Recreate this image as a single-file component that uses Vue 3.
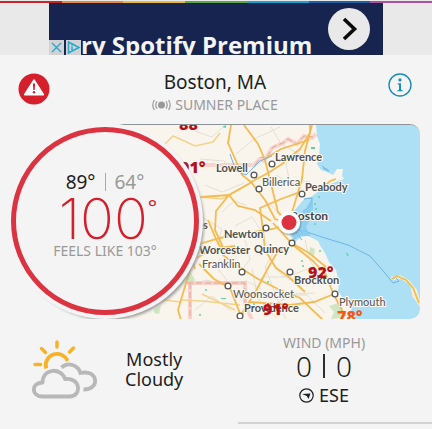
<script setup>
const stripes = ['#c9252b', '#e58a3c', '#e8b83a', '#5ba84a', '#1ba3d0', '#2260a5', '#ab519f']

const towns = [
  { name: 'Lowell', x: 216, y: 171, cx: 254, cy: 174 },
  { name: 'Lawrence', x: 275, y: 160, cx: 272, cy: 163 },
  { name: 'Billerica', x: 262, y: 185, cx: 259, cy: 188, light: true },
  { name: 'Peabody', x: 305, y: 190, cx: 302, cy: 193 },
  { name: 'Newton', x: 224, y: 237, cx: 266, cy: 227 },
  { name: 'Worcester', x: 199, y: 253 },
  { name: 'Quincy', x: 254, y: 252, cx: 292, cy: 242 },
  { name: 'Franklin', x: 202, y: 267, cx: 242, cy: 271, light: true },
  { name: 'Brockton', x: 294, y: 283, cx: 290, cy: 271 },
  { name: 'Woonsocket', x: 233, y: 297, cx: 228, cy: 285, light: true },
  { name: 'Plymouth', x: 339, y: 305, cx: 335, cy: 293, light: true },
  { name: 'Providence', x: 244, y: 311, cx: 240, cy: 315 }
]

const temps = [
  { value: '88°', x: 179, y: 129, color: '#b5121b' },
  { value: '91°', x: 180, y: 172, color: '#b5121b' },
  { value: '92°', x: 308, y: 277, color: '#b5121b' },
  { value: '91°', x: 263, y: 314, color: '#c00d12' },
  { value: '78°', x: 337, y: 321, color: '#ee5a1c' }
]
</script>

<template>
  <main class="app">
    <div class="stripes">
      <span v-for="c in stripes" :key="c" :style="{ background: c }"></span>
    </div>

    <section class="ad-slot">
      <div class="ad">
        <span class="ad-text">ry Spotify Premium</span>
        <div class="ad-marks">
          <button class="mark" aria-label="Close ad">
            <svg width="15" height="15" viewBox="0 0 15 15"><path d="M3 3L12 12M12 3L3 12" fill="none" stroke="#22a9cc" stroke-width="1.4" /></svg>
          </button>
          <button class="mark" aria-label="Ad choices">
            <svg width="15" height="15" viewBox="0 0 15 15"><path d="M2.5 2L13 7.500L2.500 13Z M6 6.500V10" fill="none" stroke="#22a9cc" stroke-width="1.5" /><circle cx="6" cy="4.900" r=".8" fill="#22a9cc" /></svg>
          </button>
        </div>
        <button class="ad-go" aria-label="Open ad">
          <svg width="42" height="42" viewBox="0 0 42 42"><path d="M16 11L26.500 21L16 31" fill="none" stroke="#0b0b0b" stroke-width="3.600" /></svg>
        </button>
      </div>
    </section>

    <header class="place">
      <button class="icon-btn" aria-label="Weather alert">
        <svg width="32" height="32" viewBox="0 0 32 32">
          <circle cx="16" cy="16" r="15.500" fill="#d5202b" />
          <path d="M16 7.500L25 21.500H7Z" fill="#fff" stroke="#fff" stroke-width="2.200" stroke-linejoin="round" />
          <path d="M14.900 10.500H17.100L16.700 17H15.300Z" fill="#d5202b" />
          <circle cx="16" cy="19.300" r="1.200" fill="#d5202b" />
        </svg>
      </button>
      <div class="place-names">
        <h1>Boston, MA</h1>
        <p>
          <svg width="19" height="12" viewBox="0 0 19 12">
            <circle cx="9.500" cy="6" r="3.500" fill="#999" />
            <path d="M5 2.200Q2.600 6 5 9.800M14 2.200Q16.400 6 14 9.800M2.400 1Q-.8 6 2.400 11M16.600 1Q19.800 6 16.600 11" fill="none" stroke="#999" stroke-width="1.200" />
          </svg>
          SUMNER PLACE
        </p>
      </div>
      <button class="icon-btn" aria-label="Information">
        <svg width="24" height="24" viewBox="0 0 24 24">
          <circle cx="12" cy="12" r="11" fill="none" stroke="#1b8db5" stroke-width="1.400" />
          <circle cx="12" cy="6.900" r="1.600" fill="#1b8db5" />
          <path d="M9.800 10.200H13V17H14.500V18.200H9.500V17H11V11.400H9.800Z" fill="#1b8db5" />
        </svg>
      </button>
    </header>

    <section class="overview">
      <svg class="map" viewBox="105 124 315 195" preserveAspectRatio="xMinYMin slice" role="img" aria-label="Temperature map around Boston">
        <rect x="105" y="124" width="400" height="196" fill="#aee0f5" />
        <path d="M105 124H316L317 135L320 143L319 156L317 163L321 169L329 172L333 174L337 168L343 168L342 175L344 178L338 180L328 184L320 189L311 196L305 197L299 204L293 211L297 218L293 226L289 233L295 241L301 236L308 235L318 240L321 246L325 252L329 261L336 269L339 280L338 290L345 300L351 308L354 320H105Z" fill="#f9f5ec" />
        <path d="M391 276L400 274L409 279L417 289L420 300V306L413 296L410 284L401 278L392 279Z" fill="#eef0d8" />
        <path d="M411 288L417 291L418 298L413 297Z" fill="#f5eedc" />

        <g fill="#cfe6c3">
          <path d="M329 305L338 302L343 308L340 317L331 318L334 311Z" />
          <path d="M310 246L315 248L314 255L309 253Z" />
          <path d="M190 270L195 279L191 283L187 279Z" />
          <path d="M154 308L161 304L159 313L154 312Z" />
        </g>
        <g fill="#5fd0a5">
          <path d="M222 126L226 124V127Z" /><path d="M311 146H315V148H311Z" />
          <path d="M346 251L349 254L347 255Z" /><path d="M221 297H226V298H221Z" />
          <circle cx="262" cy="278" r="1" /><circle cx="268" cy="281" r="1" /><circle cx="200" cy="314" r="1" />
          <circle cx="254" cy="303" r="1" /><circle cx="302" cy="260" r="1" /><circle cx="303" cy="265" r="1" />
          <circle cx="320" cy="250" r="1" /><circle cx="315" cy="223" r="1" /><circle cx="319" cy="196" r="1" />
          <circle cx="315" cy="203" r="1" /><circle cx="316" cy="208" r="1" /><circle cx="206" cy="289" r="1" />
        </g>

        <g fill="none" stroke="#e4dfd3" stroke-width="1">
          <path d="M195 130L212 136L222 127M236 153L254 138L280 126M205 184L222 191L244 182M200 158L224 160L230 172M271 126L281 143L299 153M262 196L275 208L284 221M222 211L234 200L246 204M200 215L222 228L217 244M276 174L290 183L310 180M235 225L252 216L262 231M302 148L286 163L290 182" />
          <path d="M190 285L206 279L228 284L246 280L262 288M245 239L250 258L240 272M270 259L282 274L302 286M276 247L265 266L275 292L286 319M214 263L226 278L236 303M262 276L287 276L315 265M305 239L310 260L326 283M283 294L307 294L325 312M195 309L212 295L231 310M252 268L258 298L276 317M275 303L294 293L315 292" />
        </g>

        <g fill="none" stroke="#f6c9c1" stroke-width="4">
          <path d="M205 164H254L260 158L264 160L272 147L283 142L288 138L297 143L304 135L312 137L316 133" opacity=".75" />
          <path d="M187 282H245V302L252 319M190 282V319" opacity=".8" />
        </g>
        <path d="M187 282H245V302M190 282V319M255 164L261 156L266 158L273 146L283 142L288 138L297 143L304 135L313 136" fill="none" stroke="#e4a39c" stroke-width="1" stroke-dasharray="6 3" />

        <g fill="none" stroke="#f3d38c" stroke-width="1.500">
          <path d="M165 143L173 135L180 138L195 145L213 141L220 132M200 196L222 198L252 181M145 304L165 299L180 301M202 293L235 309M180 299L202 300L240 304" />
        </g>
        <g fill="none" stroke="#f5bb50" stroke-width="1.800">
          <path d="M231 124L228 142L236 160L242 174L251 181L265 199L275 218L289 222" />
          <path d="M244 124L258 143L265 159L271 183L278 211L289 222M251 181L268 172L282 163L300 148L310 132L310 124" />
          <path d="M312 124L305 150L302 178L293 208L289 222M201 196L229 194L252 181M229 194L216 210L215 229L222 244L223 254L236 264M229 194L238 205L255 209L271 220" />
          <path d="M300 191L281 198L260 207L263 229L265 249L276 267L289 276L305 291M266 157L281 148L309 139" />
          <path d="M196 244L220 237L248 232L273 228L289 222M197 257L211 248L235 245M199 263L214 278L230 287L241 315M208 219L216 238L222 249" />
          <path d="M273 222L285 235L293 244L313 260L326 274L331 287L334 294L345 315M293 244L278 250L268 267L255 292L240 315M236 264L258 278L278 288L300 297L323 319M242 314L250 301L290 304L314 301L334 293" />
          <path d="M295 244L309 252L326 266M193 259L186 282L178 309L181 319M195 268L190 252" />
          <path d="M326 184L330 180L336 178" />
          <path d="M392 278L397 275L406 279L413 287L419 302" />
        </g>

        <g fill="none" stroke="#6fb4e7" stroke-width="1">
          <path d="M290 227L304 230L325 237L348 244L370 255L384 271L393 282L399 280L396 277" />
          <path d="M290 226L299 235M291 224L302 239M289 220L303 233M286 225L294 234" />
          <path d="M230 153L236 170L246 174L260 160L272 155M304 198L312 197L310 206L303 210M322 165L329 170L323 167M304 214L311 210" />
        </g>
        <path d="M292 220L304 210L313 196L313 213L306 226L311 235L300 235L293 240Z" fill="#83c9ed" opacity=".75" />

        <g class="temps">
          <text v-for="(t, i) in temps.slice(0, 2)" :key="i" :x="t.x" :y="t.y" :fill="t.color">{{ t.value }}</text>
        </g>
        <g v-for="t in towns" :key="t.name">
          <circle v-if="t.cx" :cx="t.cx" :cy="t.cy" r="2.900" fill="#fff" stroke="#555" stroke-width="1.300" />
          <text class="town" :class="{ light: t.light }" :x="t.x" :y="t.y">{{ t.name }}</text>
        </g>
        <text class="town" x="203" y="228">s</text>
        <text class="city" x="290" y="219">Boston</text>
        <g class="temps">
          <text v-for="(t, i) in temps.slice(2)" :key="i" :x="t.x" :y="t.y" :fill="t.color">{{ t.value }}</text>
        </g>
        <circle cx="290" cy="223" r="11.500" fill="#465966" opacity=".3" />
        <circle cx="289" cy="221.500" r="11" fill="#fff" />
        <circle cx="289" cy="221.500" r="7.500" fill="#dc3341" />
      </svg>

      <div class="dial">
        <div class="range"><span>89°</span><i></i><span class="low">64°</span></div>
        <div class="now">100<sup>°</sup></div>
        <div class="feels">FEELS LIKE 103°</div>
      </div>
    </section>

    <section class="details">
      <div class="sky">
        <svg width="66" height="60" viewBox="0 0 66 60" fill="none" stroke-width="3.800">
          <g stroke="#f9b223">
            <path d="M14.200 29.500A11.300 11.300 0 0 1 35.500 22" />
            <path d="M3 25.500H8.500M9.500 9.500L13.500 13.500M25 3V8M41.500 9L37.500 13" stroke-linecap="round" stroke-width="3.500" />
          </g>
          <g stroke="#b8b8b8">
            <path d="M10.500 57.500C-1 57.500-1 43.500 10.500 43.500C11 28.500 29.500 28.500 33 40C49 38 50 57.500 37.500 57.500Z" stroke-linejoin="round" />
            <path d="M29.500 28.500C36 22.500 46 26 48.500 34C67 30 68 51 51.500 50.500" />
          </g>
        </svg>
        <p>Mostly<br />Cloudy</p>
      </div>
      <div class="wind">
        <h2>WIND (MPH)</h2>
        <div class="speed"><span>0</span><i></i><span>0</span></div>
        <div class="heading">
          <svg width="15" height="15" viewBox="0 0 15 15">
            <circle cx="7.500" cy="7.500" r="6.700" fill="none" stroke="#1c1e22" stroke-width="1.200" />
            <path d="M3 6L11.500 5.500L9.500 11L7.800 8Z" fill="#1c1e22" />
          </svg>
          ESE
        </div>
      </div>
    </section>
    <div class="rule"></div>
  </main>
</template>

<style>
body {
  margin: 0;
  background: #f4f4f4;
}
</style>

<style scoped>
.app {
  font-family: "Noto Sans", "Open Sans", sans-serif;
  color: #1c1e22;
  background: #f4f4f4;
}
h1, h2, p {
  margin: 0;
  font-weight: 400;
}
button {
  display: flex;
  padding: 0;
  border: 0;
  background: none;
  cursor: pointer;
}
svg {
  display: block;
}
.stripes {
  display: flex;
  height: 2px;
  padding-top: 1px;
  background: #e9e9e9;
}
.stripes span {
  flex: 1;
}
.ad-slot {
  display: flex;
  justify-content: center;
  height: 52px;
  background: #e9e9e9;
}
.ad {
  position: relative;
  box-sizing: border-box;
  display: flex;
  align-items: center;
  justify-content: space-between;
  width: 334px;
  padding: 0 13px 0 32px;
  overflow: hidden;
  background: #16244f;
}
.ad-text {
  padding-top: 32px;
  font: 700 24px/32px "Open Sans", sans-serif;
  color: #f4f4f4;
  white-space: nowrap;
}
.ad-marks {
  position: absolute;
  left: 0;
  bottom: 0;
  display: flex;
  gap: 2px;
}
.mark {
  background: #d3d3d5;
}
.ad-go {
  border-radius: 50%;
  background: #e9e9e9;
}
.place {
  display: grid;
  grid-template-columns: 1fr auto 1fr;
  align-items: start;
  height: 55px;
  padding: 14px 20px 0 18px;
}
.icon-btn {
  margin-top: 4px;
}
.icon-btn:last-child {
  justify-self: end;
}
.place-names {
  display: flex;
  flex-direction: column;
  align-items: center;
}
.place h1 {
  font-size: 19px;
  line-height: 26px;
}
.place p {
  display: flex;
  align-items: center;
  gap: 4px;
  font-size: 14px;
  line-height: 20px;
  color: #999;
}
.overview {
  display: grid;
  padding-right: 12px;
}
.map {
  grid-area: 1 / 1;
  justify-self: end;
  box-sizing: border-box;
  width: calc(100% - 105px);
  height: 195px;
  border-top: 1px solid #8d9497;
  border-radius: 0 10px 10px 0;
}
.town, .city {
  font: 700 11px "Lato", sans-serif;
  fill: #50504e;
  stroke: #fdfaf2;
  stroke-width: 2px;
  paint-order: stroke;
}
.town.light {
  font-weight: 500;
  fill: #5c5c5a;
}
.city {
  font-size: 12px;
  fill: #3c4449;
}
.temps text {
  font: 800 16px "Open Sans", sans-serif;
}
.dial {
  grid-area: 1 / 1;
  box-sizing: border-box;
  width: 188px;
  height: 188px;
  margin: 3px 0 4px 11px;
  padding-top: 40px;
  border: 5px solid #dc3341;
  border-radius: 50%;
  background: #f4f4f4;
  box-shadow: 0 0 0 4px #f4f4f4, 3px 3px 3px 2px #9a9a9a;
  text-align: center;
  clip-path: inset(-3px -8px -4px 0);
}
.range {
  display: flex;
  align-items: center;
  justify-content: center;
  gap: 9px;
  font-size: 19px;
  line-height: 20px;
}
.range i {
  width: 1px;
  height: 18px;
  background: #aaa;
}
.low, .feels {
  color: #999;
}
.now {
  display: flex;
  justify-content: center;
  height: 50px;
  padding-left: 6px;
  font: 200 56px/54px "Inter", sans-serif;
  color: #d5202b;
}
.now sup {
  font: 400 22px/28px "Noto Sans", sans-serif;
}
.feels {
  font-size: 14px;
  line-height: 18px;
}
.details {
  display: grid;
  grid-template-columns: 1fr 1fr;
  height: 103px;
}
.sky {
  display: flex;
  align-items: flex-start;
  gap: 27px;
  padding: 20px 0 0 32px;
}
.sky p {
  padding-top: 10px;
  font-size: 18px;
  line-height: 20px;
  text-align: center;
}
.wind {
  display: flex;
  flex-direction: column;
  align-items: center;
  padding-top: 14px;
}
.wind h2 {
  font-size: 14px;
  line-height: 20px;
  color: #999;
}
.speed {
  display: flex;
  align-items: center;
  gap: 11px;
  font: 300 28px/26px "Noto Sans", sans-serif;
}
.speed i {
  width: 2px;
  height: 24px;
  background: #2a2c30;
}
.heading {
  display: flex;
  align-items: center;
  gap: 5px;
  font-size: 18px;
  line-height: 32px;
}
.rule {
  height: 2px;
  margin-left: 55%;
  background: #d2d2d2;
}
</style>
